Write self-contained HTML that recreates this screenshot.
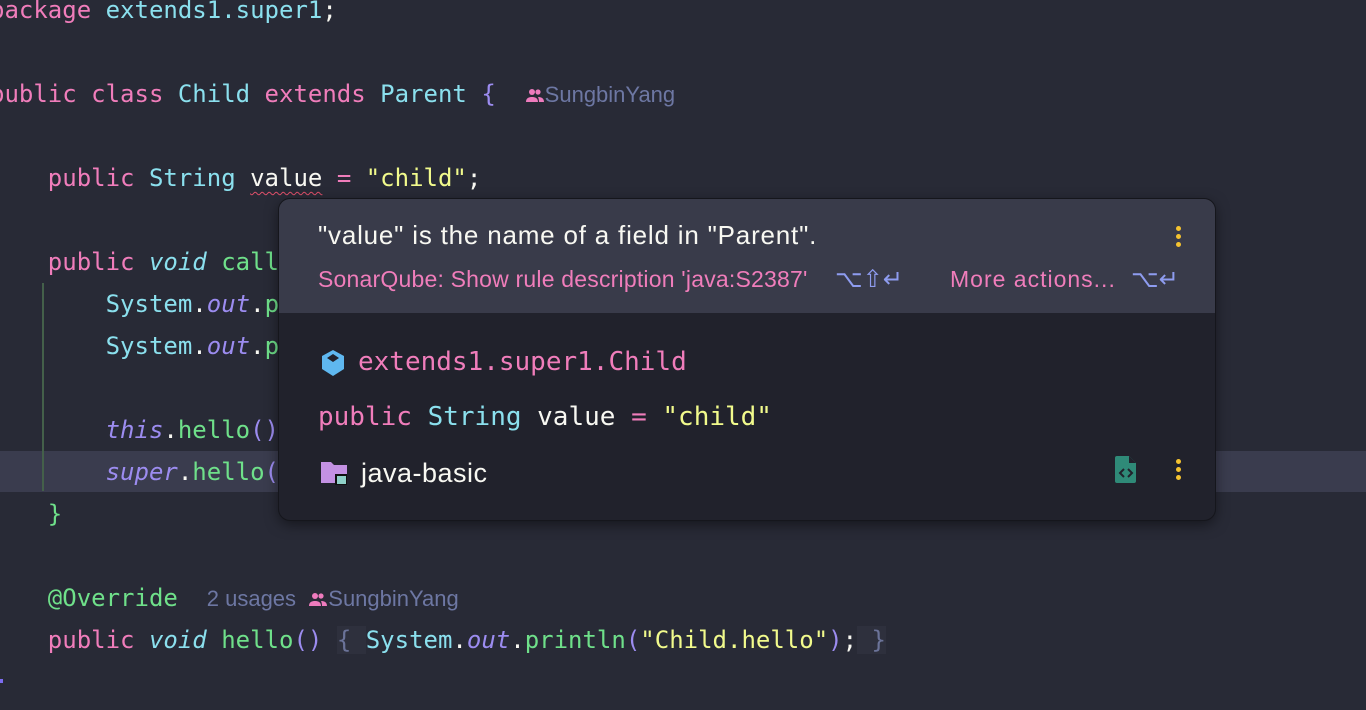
<!DOCTYPE html>
<html><head><meta charset="utf-8"><style>
body{margin:0;width:1366px;height:710px;overflow:hidden;background:#282a36;position:relative;font-family:"DejaVu Sans Mono","Liberation Mono",monospace;}
.l{position:absolute;left:-10px;font-size:24px;line-height:42px;height:42px;white-space:pre;color:#f8f8f2;}
.k{color:#f07dbb}.t{color:#8be0ee}.s{color:#f1fa8c}.f{color:#6fe08a}.p{color:#9c8cf0}.i{font-style:italic}.w{color:#f8f8f2}.g{color:#6b7399}
.hint{font-family:"Liberation Sans",sans-serif;font-size:22px;color:#6d77a3;}
.pop{position:absolute;left:279px;top:199px;width:936px;height:321px;border-radius:11px;background:#21222c;overflow:hidden;box-shadow:0 0 0 1px #15161c,0 4px 14px rgba(0,0,0,.5);}
.top{position:absolute;left:0;top:0;width:100%;height:114px;background:#393b4a;}
.ps{position:absolute;font-family:"Liberation Sans",sans-serif;white-space:pre;}
.dots{position:absolute;width:4px;}
.dots i{display:block;width:5px;height:5px;border-radius:50%;background:#f5c330;margin-bottom:3px;}
</style></head><body>
<div style="position:absolute;left:0;top:451px;width:1366px;height:41px;background:#3a3c4e"></div>
<div style="position:absolute;left:42px;top:283px;width:2px;height:208px;background:#44604a"></div>
<div class="l" style="top:-11px"><span class="k">package</span> <span class="t">extends1.super1</span>;</div>
<div class="l" style="top:73px"><span class="k">public class</span> <span class="t">Child</span> <span class="k">extends</span> <span class="t">Parent</span> <span class="p">{</span>  <span class="hint"><svg width="20" height="16" viewBox="0 0 20 16" style="vertical-align:-1px"><circle cx="7" cy="5" r="3" fill="#ee7bbd"/><circle cx="13" cy="5" r="2.6" fill="#ee7bbd"/><path d="M1 15c0-4 3-5 6-5s6 1 6 5z M13 10c3 0 6 1 6 5h-5c0-2-0.5-4-1-5z" fill="#ee7bbd"/></svg>SungbinYang</span></div>
<div class="l" style="top:157px">    <span class="k">public</span> <span class="t">String</span> <span style="text-decoration:underline wavy #e0506a;text-underline-offset:5px;text-decoration-thickness:1px">value</span> <span class="k">=</span> <span class="s">"child"</span>;</div>
<div class="l" style="top:241px">    <span class="k">public</span> <span class="t i">void</span> <span class="f">call</span></div>
<div class="l" style="top:283px">        <span class="t">System</span>.<span class="p i">out</span>.<span class="f">p</span></div>
<div class="l" style="top:325px">        <span class="t">System</span>.<span class="p i">out</span>.<span class="f">p</span></div>
<div class="l" style="top:409px">        <span class="p i">this</span>.<span class="f">hello</span><span class="p">()</span></div>
<div class="l" style="top:451px">        <span class="p i">super</span>.<span class="f">hello</span><span class="p">(</span></div>
<div class="l" style="top:493px">    <span class="f">}</span></div>
<div class="l" style="top:577px">    <span class="f">@Override</span>  <span class="hint">2 usages  <svg width="20" height="16" viewBox="0 0 20 16" style="vertical-align:-1px"><circle cx="7" cy="5" r="3" fill="#ee7bbd"/><circle cx="13" cy="5" r="2.6" fill="#ee7bbd"/><path d="M1 15c0-4 3-5 6-5s6 1 6 5z M13 10c3 0 6 1 6 5h-5c0-2-0.5-4-1-5z" fill="#ee7bbd"/></svg>SungbinYang</span></div>
<div class="l" style="top:619px">    <span class="k">public</span> <span class="t i">void</span> <span class="f">hello</span><span class="p">()</span> <span class="g" style="background:#2e303d">{ </span><span class="t">System</span>.<span class="p i">out</span>.<span class="f">println</span><span class="p">(</span><span class="s">"Child.hello"</span><span class="p">)</span>;<span class="g" style="background:#2e303d"> }</span></div>
<div style="position:absolute;left:0;top:679px;width:3px;height:4px;background:#7c6cf0"></div>

<div class="pop">
<div class="top"></div>
<div class="ps" style="left:39px;top:21px;font-size:26px;color:#f8f8f2;letter-spacing:0.8px">"value" is the name of a field in "Parent".</div>
<div class="ps" style="left:39px;top:67px;font-size:23px;color:#f07dbb;letter-spacing:0.2px">SonarQube: Show rule description 'java:S2387'</div>
<div class="ps" style="left:556px;top:66px;font-size:24px;color:#8e9cf0">⌥⇧↵</div>
<div class="ps" style="left:671px;top:67px;font-size:23px;color:#f07dbb;letter-spacing:1px">More actions...</div>
<div class="ps" style="left:852px;top:66px;font-size:24px;color:#8e9cf0">⌥↵</div>
<div class="dots" style="left:897px;top:27px"><i></i><i></i><i></i></div>
<svg style="position:absolute;left:41px;top:150px" width="26" height="28" viewBox="0 0 26 28"><path d="M13 1l11 6v13l-11 7-11-7V7z" fill="#5fb8f0"/><path d="M13 5l6 4-6 4-6-4z" fill="#21222c"/></svg>
<div class="ps" style="left:79px;top:148px;font-family:'DejaVu Sans Mono',monospace;font-size:26px;color:#f07dbb">extends1.super1.Child</div>
<div class="ps" style="left:39px;top:203px;font-family:'DejaVu Sans Mono',monospace;font-size:26px;color:#f8f8f2"><span class="k">public</span> <span class="t">String</span> value <span class="k">=</span> <span class="s">"child"</span></div>
<svg style="position:absolute;left:41px;top:261px" width="30" height="26" viewBox="0 0 30 26"><path d="M1 2h10l3 3h13v18H1z" fill="#c391e3"/><rect x="15" y="14" width="12" height="11" fill="#111"/><rect x="17" y="16" width="9" height="8" fill="#8ed0c8"/></svg>
<div class="ps" style="left:82px;top:259px;font-size:27px;color:#f8f8f2;letter-spacing:0.5px">java-basic</div>
<svg style="position:absolute;left:835px;top:256px" width="24" height="29" viewBox="0 0 24 29"><path d="M3 1h12l7 7v18a2 2 0 0 1-2 2H3a2 2 0 0 1-2-2V3a2 2 0 0 1 2-2z" fill="#2f8a78"/><path d="M15 1v7h7z" fill="#21222c"/><path d="M10 14l-4 4 4 4M14 14l4 4-4 4" stroke="#21222c" stroke-width="2" fill="none"/></svg>
<div class="dots" style="left:897px;top:260px"><i></i><i></i><i></i></div>
</div>
</body></html>
